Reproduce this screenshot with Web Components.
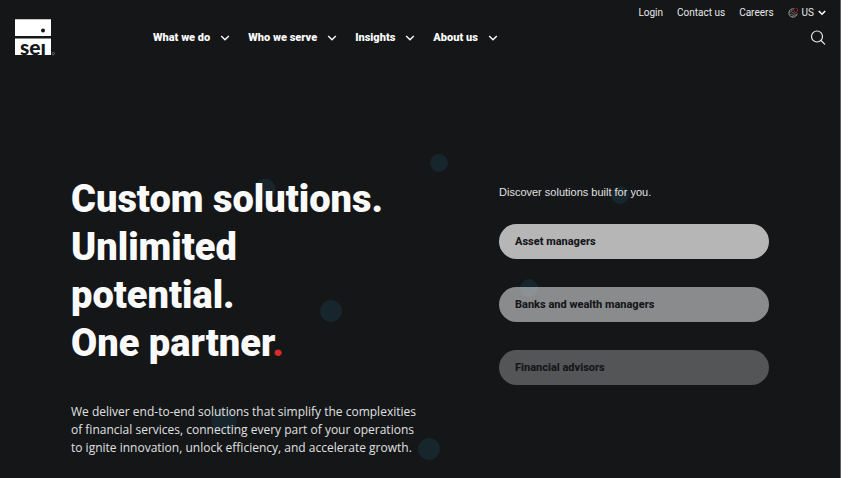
<!DOCTYPE html>
<html lang="en">
<head>
    <meta charset="utf-8">
    <meta name="viewport" content="width=device-width, initial-scale=1">
    <title>SEI</title>
    <style>
        body {
            margin: 0;
            padding-right: 9px;
            background: #fff;
        }
    </style>
</head>
<body>
    <sei-page>
        <sei-header slot="header">
            <sei-logo slot="logo"></sei-logo>
            <nav-item slot="nav">What we do</nav-item>
            <nav-item slot="nav">Who we serve</nav-item>
            <nav-item slot="nav">Insights</nav-item>
            <nav-item slot="nav">About us</nav-item>
            <util-link slot="util">Login</util-link>
            <util-link slot="util">Contact us</util-link>
            <util-link slot="util">Careers</util-link>
            <region-picker slot="util">US</region-picker>
        </sei-header>
        <sei-hero>
            <span slot="title">Custom solutions.<br>Unlimited<br>potential.<br>One partner</span>
            <span slot="text">We deliver end-to-end solutions that simplify the complexities<br>of financial services, connecting every part of your operations<br>to ignite innovation, unlock efficiency, and accelerate growth.</span>
            <span slot="intro">Discover solutions built for you.</span>
            <pill-link data-level="high">Asset managers</pill-link>
            <pill-link data-level="mid">Banks and wealth managers</pill-link>
            <pill-link data-level="low">Financial advisors</pill-link>
        </sei-hero>
    </sei-page>

    <script>
        class SeiPage extends HTMLElement {
            connectedCallback() {
                this.attachShadow({ mode: "open" });
                this.shadowRoot.innerHTML = `
                    <style>
                        :host {
                            display: flex;
                            flex-direction: column;
                            position: relative;
                            z-index: 0;
                            box-sizing: border-box;
                            min-height: 100vh;
                            overflow: hidden;
                            background: #141618;
                            border-right: 1px solid #5d605f;
                            color: #fafafa;
                            font-family: Roboto, "Liberation Sans", sans-serif;
                        }
                        main {
                            flex: 1;
                        }
                    </style>
                    <floating-dots></floating-dots>
                    <slot name="header"></slot>
                    <main><slot></slot></main>
                `;
            }
        }
        customElements.define("sei-page", SeiPage);

        const DOTS = [
            [439, 163, 18],
            [265, 189, 21],
            [620, 195, 18],
            [529, 288, 18],
            [331, 311, 22],
            [224, 421, 26],
            [429, 449, 22],
        ];

        class FloatingDots extends HTMLElement {
            connectedCallback() {
                this.attachShadow({ mode: "open" });
                this.shadowRoot.innerHTML = `
                    <style>
                        :host {
                            position: absolute;
                            inset: 0;
                            z-index: -1;
                            pointer-events: none;
                        }
                        i {
                            position: absolute;
                            border-radius: 50%;
                            transform: translate(-50%, -50%);
                            background: #17252c;
                        }
                    </style>
                    ${DOTS.map(([x, y, d]) => `<i style="left:${x}px;top:${y}px;width:${d}px;height:${d}px"></i>`).join("")}
                `;
            }
        }
        customElements.define("floating-dots", FloatingDots);

        class SeiHeader extends HTMLElement {
            connectedCallback() {
                this.attachShadow({ mode: "open" });
                this.shadowRoot.innerHTML = `
                    <style>
                        :host {
                            display: block;
                        }
                        header {
                            display: grid;
                            grid-template-columns: 138px 1fr auto;
                            grid-template-rows: 25px 26px;
                            padding: 0 14px 0 15px;
                        }
                        .logo {
                            grid-row: 1 / 3;
                            height: 32px;
                            padding-top: 19px;
                        }
                        nav {
                            display: flex;
                            align-items: center;
                        }
                        .util {
                            grid-column: 2 / 4;
                            justify-content: flex-end;
                            gap: 14px;
                        }
                        .main {
                            grid-column: 2;
                            gap: 18px;
                        }
                        button {
                            display: flex;
                            align-items: center;
                            padding: 0;
                            border: 0;
                            background: none;
                            color: #e8e8e8;
                            cursor: pointer;
                        }
                    </style>
                    <header>
                        <div class="logo"><slot name="logo"></slot></div>
                        <nav class="util" aria-label="Utility"><slot name="util"></slot></nav>
                        <nav class="main" aria-label="Main"><slot name="nav"></slot></nav>
                        <button aria-label="Search">
                            <svg width="16" height="16" viewBox="0 0 16 16" fill="none" stroke="currentColor" stroke-width="1.2" stroke-linecap="round">
                                <circle cx="7" cy="6.500" r="5.500"/>
                                <path d="M11 10.500l3.700 3.700"/>
                            </svg>
                        </button>
                    </header>
                `;
            }
        }
        customElements.define("sei-header", SeiHeader);

        class SeiLogo extends HTMLElement {
            connectedCallback() {
                this.attachShadow({ mode: "open" });
                this.shadowRoot.innerHTML = `
                    <style>
                        :host,
                        a,
                        svg {
                            display: block;
                        }
                        a {
                            width: 42px;
                        }
                        text {
                            font-family: Lato, sans-serif;
                        }
                    </style>
                    <a href="#" aria-label="SEI home">
                        <svg width="42" height="46" viewBox="0 0 42 46">
                            <path fill="#fff" d="M0 .3h36v16.600H0zM0 19.500h36V36H0z"/>
                            <circle cx="28" cy="11.400" r="2" fill="#141618"/>
                            <text x="5" y="36" font-size="21" font-weight="900" fill="#141618">seı</text>
                            <circle cx="38.300" cy="34.600" r="1.200" fill="none" stroke="#8d8f90" stroke-width=".6"/>
                        </svg>
                    </a>
                `;
            }
        }
        customElements.define("sei-logo", SeiLogo);

        class NavItem extends HTMLElement {
            connectedCallback() {
                this.attachShadow({ mode: "open" });
                this.shadowRoot.innerHTML = `
                    <style>
                        :host {
                            display: block;
                        }
                        button {
                            display: flex;
                            align-items: center;
                            gap: 10px;
                            padding: 0;
                            border: 0;
                            background: none;
                            color: inherit;
                            font: 900 11px/16px Roboto, sans-serif;
                            cursor: pointer;
                        }
                    </style>
                    <button aria-expanded="false">
                        <slot></slot>
                        <svg width="10" height="6" viewBox="0 0 10 6" fill="none" stroke="currentColor" stroke-width="1.400">
                            <path d="M1.200 1L5 4.800 8.800 1"/>
                        </svg>
                    </button>
                `;
            }
        }
        customElements.define("nav-item", NavItem);

        class UtilLink extends HTMLElement {
            connectedCallback() {
                this.attachShadow({ mode: "open" });
                this.shadowRoot.innerHTML = `
                    <style>
                        :host {
                            display: block;
                        }
                        a {
                            display: block;
                            color: #e8e8e8;
                            font-size: 10px;
                            line-height: 16px;
                            text-decoration: none;
                        }
                    </style>
                    <a href="#"><slot></slot></a>
                `;
            }
        }
        customElements.define("util-link", UtilLink);

        class RegionPicker extends HTMLElement {
            connectedCallback() {
                this.attachShadow({ mode: "open" });
                this.shadowRoot.innerHTML = `
                    <style>
                        :host {
                            display: block;
                        }
                        button {
                            display: flex;
                            align-items: center;
                            gap: 4px;
                            padding: 0;
                            border: 0;
                            background: none;
                            color: #e8e8e8;
                            font: 400 10px/16px Roboto, sans-serif;
                            cursor: pointer;
                        }
                    </style>
                    <button aria-expanded="false">
                        <svg width="10" height="10" viewBox="0 0 10 10" fill="none">
                            <path d="M5.500.8A4.200 4.200 0 1 0 9.200 5.500" stroke="#b5b7b8" stroke-width=".8"/>
                            <path d="M1 4.500l2.300-.7.800-1.800M1.500 7l2.300-1 1.200 1.500-.6 1.800M4 4.300l2.300 1.200L8 8M5 7.500l1.800-.6" stroke="#9a9c9d" stroke-width=".6"/>
                            <path d="M7.700 5.300L6 3a2 2 0 1 1 3.300 0z" stroke="#b3262f" stroke-width=".9"/>
                        </svg>
                        <slot></slot>
                        <svg width="8" height="6" viewBox="0 0 8 6" fill="none" stroke="#fff" stroke-width="1.600">
                            <path d="M.8 1l3.200 3.200L7.200 1"/>
                        </svg>
                    </button>
                `;
            }
        }
        customElements.define("region-picker", RegionPicker);

        class SeiHero extends HTMLElement {
            connectedCallback() {
                this.attachShadow({ mode: "open" });
                this.shadowRoot.innerHTML = `
                    <style>
                        :host {
                            display: grid;
                            grid-template-columns: minmax(0, 428fr) minmax(0, 270fr);
                            padding: 124px 71px 20px;
                        }
                        h1 {
                            margin: 0 0 36px;
                            font-size: 38px;
                            font-weight: 900;
                            line-height: 48px;
                        }
                        h1 b {
                            color: #d92b2b;
                        }
                        p {
                            margin: 0;
                            color: #e0e0e0;
                        }
                        .text {
                            font-family: "Open Sans", sans-serif;
                            font-size: 12px;
                            line-height: 18px;
                        }
                        .intro {
                            margin-bottom: 24px;
                            font-family: "Liberation Sans", sans-serif;
                            font-size: 11px;
                            line-height: 16px;
                        }
                        aside {
                            padding-top: 9px;
                        }
                        .list {
                            display: grid;
                            gap: 28px;
                        }
                    </style>
                    <section>
                        <h1><slot name="title"></slot><b>.</b></h1>
                        <p class="text"><slot name="text"></slot></p>
                    </section>
                    <aside>
                        <p class="intro"><slot name="intro"></slot></p>
                        <div class="list"><slot></slot></div>
                    </aside>
                `;
            }
        }
        customElements.define("sei-hero", SeiHero);

        class PillLink extends HTMLElement {
            connectedCallback() {
                this.attachShadow({ mode: "open" });
                this.shadowRoot.innerHTML = `
                    <style>
                        :host {
                            display: block;
                            --fill: .69;
                        }
                        :host([data-level="mid"]) {
                            --fill: .5;
                        }
                        :host([data-level="low"]) {
                            --fill: .27;
                        }
                        a {
                            display: block;
                            padding: 0 16px;
                            border-radius: 18px;
                            background: rgba(255, 255, 255, var(--fill));
                            color: #15171a;
                            font-size: 11px;
                            font-weight: 800;
                            line-height: 35px;
                            text-decoration: none;
                        }
                    </style>
                    <a href="#"><slot></slot></a>
                `;
            }
        }
        customElements.define("pill-link", PillLink);
    </script>
</body>
</html>
